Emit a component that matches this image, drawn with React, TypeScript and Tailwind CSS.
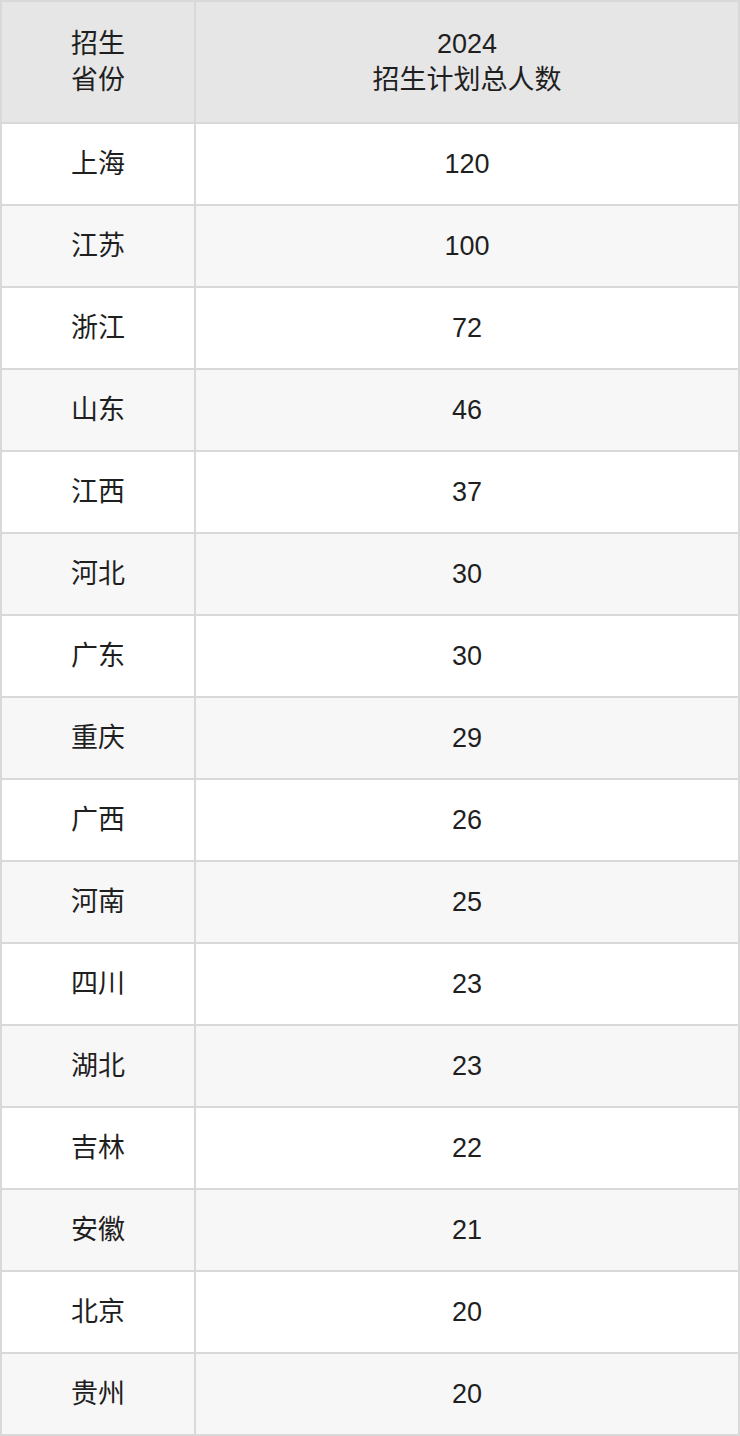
import React from 'react';

const rows: [string, number][] = [
  ['上海', 120],
  ['江苏', 100],
  ['浙江', 72],
  ['山东', 46],
  ['江西', 37],
  ['河北', 30],
  ['广东', 30],
  ['重庆', 29],
  ['广西', 26],
  ['河南', 25],
  ['四川', 23],
  ['湖北', 23],
  ['吉林', 22],
  ['安徽', 21],
  ['北京', 20],
  ['贵州', 20],
];

export default function App() {
  return (
    <div
      className="w-[740px] bg-white text-[#1f1f1f]"
      style={{ fontFamily: '"Liberation Sans", Arial, "Noto Sans CJK SC", sans-serif' }}
    >
      <table className="w-[740px] border-collapse border-2 border-[#d9d9d9] text-center text-[27px] leading-[36px]">
        <thead>
          <tr className="bg-[#e6e6e6]">
            <th className="w-[194px] h-[122px] border-2 border-[#d9d9d9] font-normal">
              招生
              <br />
              省份
            </th>
            <th className="h-[122px] border-2 border-[#d9d9d9] font-normal">
              2024
              <br />
              招生计划总人数
            </th>
          </tr>
        </thead>
        <tbody>
          {rows.map(([name, count], i) => (
            <tr key={name} className={i % 2 === 0 ? 'bg-white' : 'bg-[#f7f7f7]'}>
              <td className="h-[82px] border-2 border-[#d9d9d9]">{name}</td>
              <td className="h-[82px] border-2 border-[#d9d9d9]">{count}</td>
            </tr>
          ))}
        </tbody>
      </table>
    </div>
  );
}
